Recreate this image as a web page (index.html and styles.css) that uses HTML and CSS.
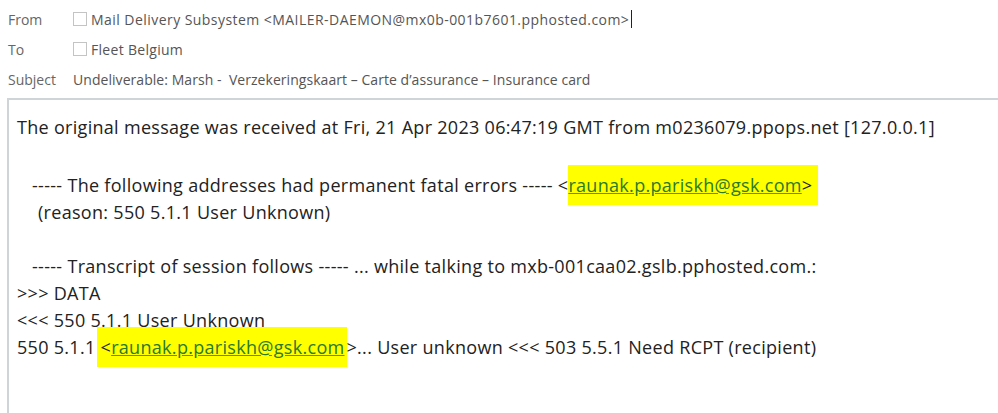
FILE: index.html
```html
<!DOCTYPE html>
<html>
<head>
<meta charset="utf-8">
<link rel="stylesheet" href="styles.css">
</head>
<body>
<div class="header">
  <div class="row">
    <span class="label">From</span>
    <span class="value from"><span class="chk"></span>Mail Delivery Subsystem &lt;MAILER-DAEMON@mx0b-001b7601.pphosted.com&gt;<span class="caret"></span></span>
  </div>
  <div class="row">
    <span class="label">To</span>
    <span class="value"><span class="chk"></span>Fleet Belgium</span>
  </div>
  <div class="row">
    <span class="label">Subject</span>
    <span class="value subj">Undeliverable: Marsh -&nbsp; Verzekeringskaart – Carte d’assurance – Insurance card</span>
  </div>
</div>
<div class="body">
  <div class="line first">The original message was received at Fri, 21 Apr 2023 06:47:19 GMT from m0236079.ppops.net [127.0.0.1]</div>
  <div class="line ind1">----- The following addresses had permanent fatal errors ----- &lt;<span class="hl hl1"><a class="lnk">raunak.p.pariskh@gsk.com</a>&gt;</span></div>
  <div class="line ind2">(reason: 550 5.1.1 User Unknown)</div>
  <div class="line ind1 gap">----- Transcript of session follows ----- ... while talking to mxb-001caa02.gslb.pphosted.com.:</div>
  <div class="line">&gt;&gt;&gt; DATA</div>
  <div class="line">&lt;&lt;&lt; 550 5.1.1 User Unknown</div>
  <div class="line">550 5.1.1 <span class="hl hl2">&lt;<a class="lnk">raunak.p.pariskh@gsk.com</a></span>&gt;... User unknown &lt;&lt;&lt; 503 5.5.1 Need RCPT (recipient)</div>
</div>
</body>
</html>
```
FILE: styles.css
```css
html, body {
  margin: 0;
  padding: 0;
  background: #ffffff;
}
body {
  width: 998px;
  height: 413px;
  overflow: hidden;
}
.header {
  padding: 4px 0 0 8px;
  font-family: "Open Sans", "Noto Sans", sans-serif;
  font-size: 14px;
  color: #5f5f5f;
}
.row {
  display: flex;
  align-items: center;
  height: 30px;
}
.label {
  width: 65px;
  flex: none;
  color: #666666;
}
.value {
  display: flex;
  align-items: center;
  color: #555555;
  white-space: nowrap;
  letter-spacing: 0.3px;
}
.from {
  letter-spacing: 0.45px;
}
.subj {
  letter-spacing: 0.05px;
}
.chk {
  width: 14px;
  height: 14px;
  border: 1px solid #c4c4c4;
  box-sizing: border-box;
  margin-right: 4px;
  flex: none;
}
.caret {
  width: 1px;
  height: 18px;
  background: #222;
  margin-left: 2px;
}
.body {
  margin: 4px 0 0 7px;
  border-top: 2px solid #cfd4d9;
  border-left: 2px solid #cfd4d9;
  height: 299px;
  padding: 14px 0 0 8px;
  font-family: "Open Sans", "Noto Sans", sans-serif;
  font-size: 18px;
  color: #222222;
  letter-spacing: 0.3px;
}
.line {
  height: 27px;
  line-height: 27px;
  white-space: nowrap;
}
.first {
  margin-bottom: 31px;
}
.ind1 { padding-left: 15px; }
.ind2 { padding-left: 21px; }
.gap { margin-top: 27px; }
.hl {
  background: #ffff00;
  padding: 8px 6px 8px 0;
}
.hl2 {
  padding: 8px 2px 8px 4px;
  margin-left: -4px;
}
.lnk {
  color: #2a7a2a;
  text-decoration: underline;
  text-decoration-color: #3d7fd6;
}
```
